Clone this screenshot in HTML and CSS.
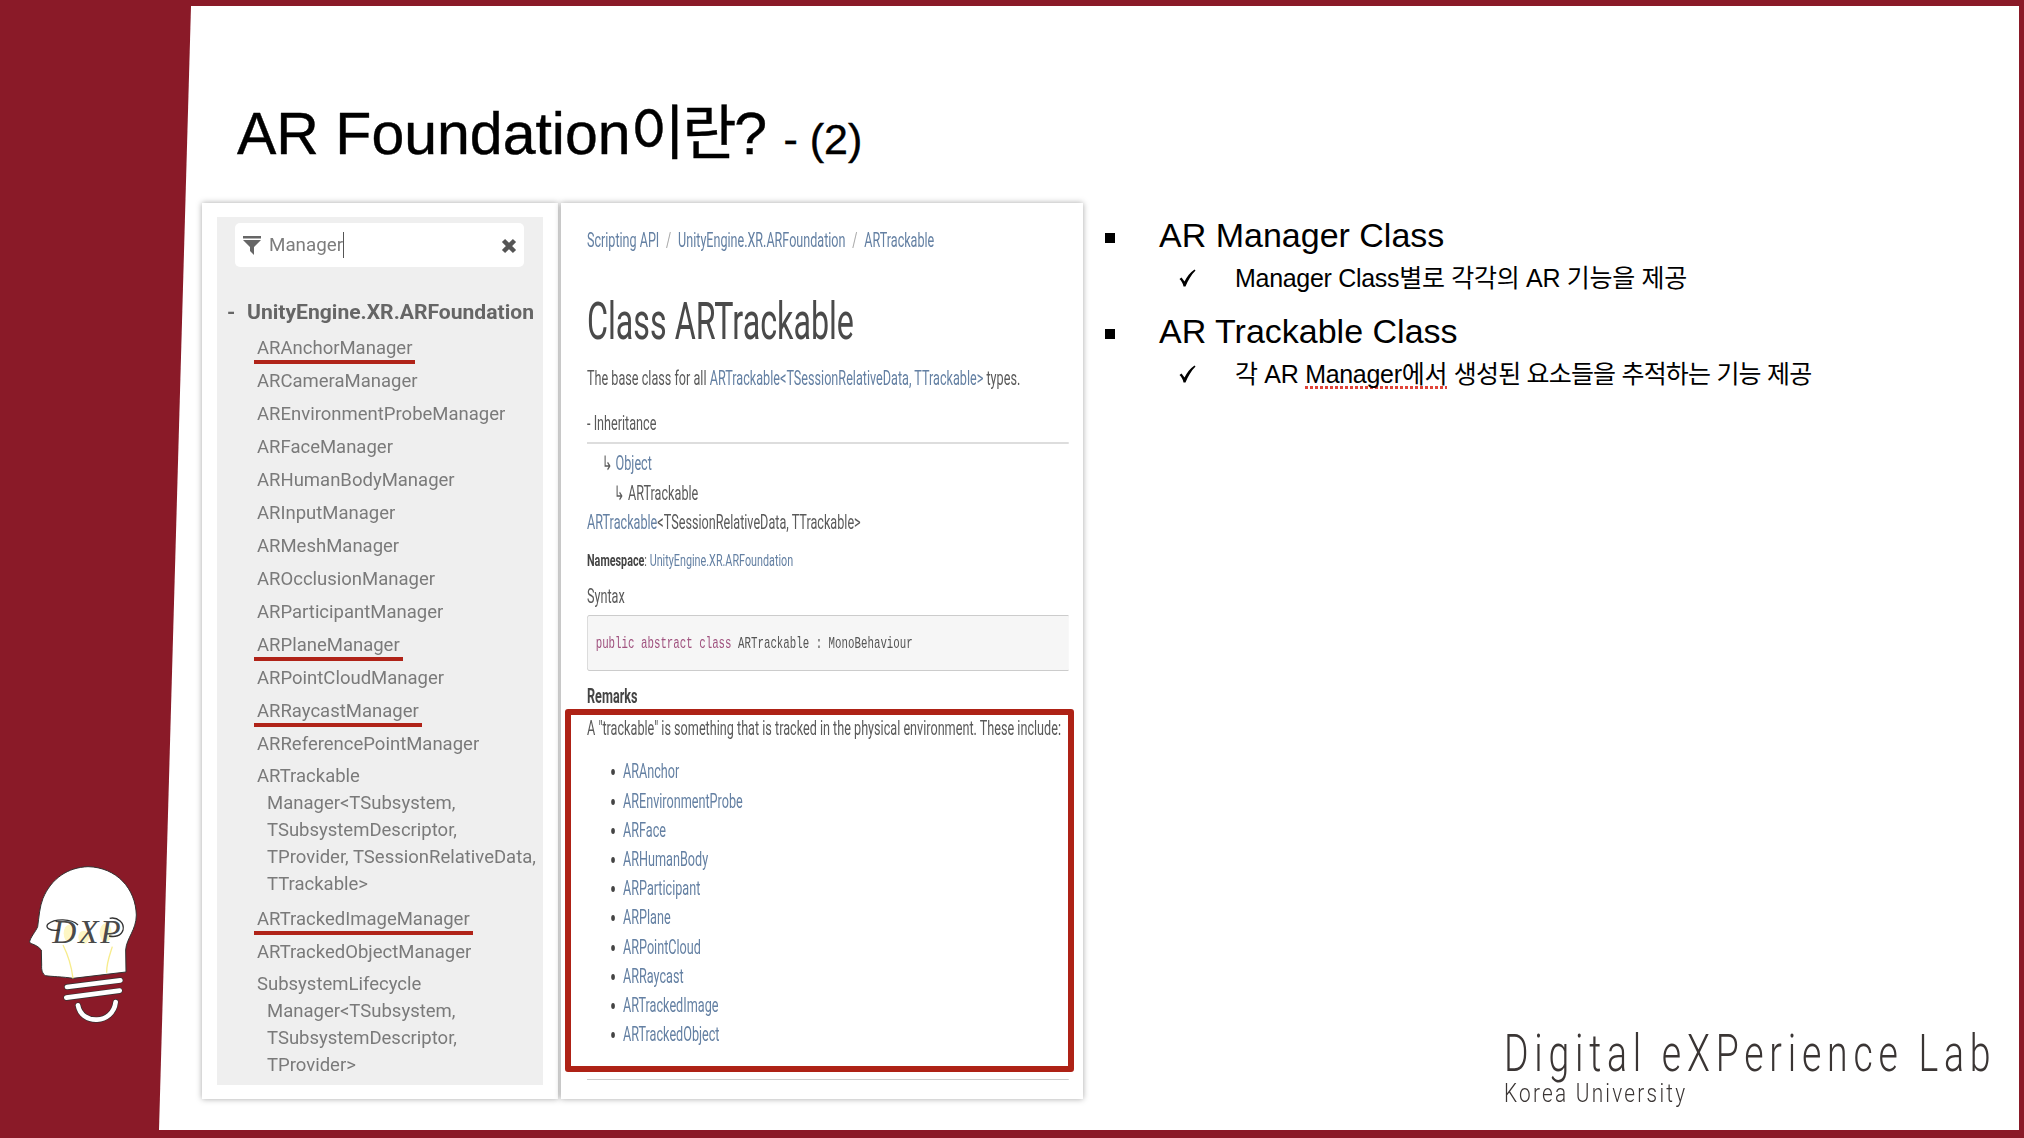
FILE: index.html
```html
<!DOCTYPE html>
<html lang="ko">
<head>
<meta charset="utf-8">
<title>AR Foundation이란?</title>
<link rel="stylesheet" href="styles.css">
</head>
<body>
<div class="slide">
  <aside class="rail">
    <svg class="logo" viewBox="40 30 360 510" aria-hidden="true">
      <path class="head" d="M60 275C62 262 78 245 84 230C88 200 90 170 100 145C125 85 175 52 235 50C320 52 378 115 380 195C380 240 350 265 348 300L349 366L190 385C160 380 125 380 108 377C98 372 95 360 96 345L95 300C85 288 72 283 62 280Z"/>
      <ellipse class="glow" cx="178" cy="250" rx="16" ry="26"/>
      <ellipse class="glow" cx="222" cy="262" rx="16" ry="20"/>
      <ellipse class="glow" cx="288" cy="248" rx="18" ry="28"/>
      <path class="filament" d="M160 285C175 315 185 345 190 385M308 290C300 315 290 340 291 368"/>
      <text class="mono" x="128" y="278" textLength="205">DXP</text>
      <path class="swash" d="M150 240C120 245 105 232 115 222C135 205 185 205 205 225M300 205C325 200 345 220 340 240C335 258 315 262 298 258"/>
      <path class="thread-edge" d="M172 411L332 391M170 443L330 422M205 466C215 525 310 525 318 456"/>
      <path class="thread" d="M172 411L332 391M170 443L330 422M205 466C215 525 310 525 318 456"/>
    </svg>
  </aside>
  <main class="panel">
    <h1 class="title">AR Foundation<span class="title-ko">이란</span>? <small class="title-sub">- (2)</small></h1>
    <div class="content">
      <section class="card nav-card">
        <div class="sidebar">
          <div class="search">
            <svg class="funnel" viewBox="0 0 18 19" aria-hidden="true"><path d="M0 0H18V2.5H0ZM0 4H18L11 11V19L7 15V11Z"/></svg>
            <span class="query">Manager</span><span class="caret"></span>
            <svg class="clear" viewBox="0 0 16 16" aria-hidden="true"><path d="M2.5 2.5L13.5 13.5M13.5 2.5L2.5 13.5"/></svg>
          </div>
          <div class="ns"><span class="ns-dash">-</span>UnityEngine.XR.ARFoundation</div>
          <ul class="tree">
            <li><span class="hit hit-a">ARAnchorManager</span></li>
            <li>ARCameraManager</li>
            <li>AREnvironmentProbeManager</li>
            <li>ARFaceManager</li>
            <li>ARHumanBodyManager</li>
            <li>ARInputManager</li>
            <li>ARMeshManager</li>
            <li>AROcclusionManager</li>
            <li>ARParticipantManager</li>
            <li><span class="hit">ARPlaneManager</span></li>
            <li>ARPointCloudManager</li>
            <li><span class="hit">ARRaycastManager</span></li>
            <li>ARReferencePointManager</li>
            <li class="hang">ARTrackable<br>Manager&lt;TSubsystem,<br>TSubsystemDescriptor,<br>TProvider, TSessionRelativeData,<br>TTrackable&gt;</li>
            <li class="after-hang"><span class="hit">ARTrackedImageManager</span></li>
            <li>ARTrackedObjectManager</li>
            <li class="hang">SubsystemLifecycle<br>Manager&lt;TSubsystem,<br>TSubsystemDescriptor,<br>TProvider&gt;</li>
          </ul>
        </div>
      </section>
      <section class="card doc-card">
        <div class="doc">
          <div class="crumbs"><a>Scripting API</a><i>/</i><a>UnityEngine.XR.ARFoundation</a><i>/</i><a>ARTrackable</a></div>
          <h2 class="doc-title">Class ARTrackable</h2>
          <p class="summary">The base class for all <a>ARTrackable&lt;TSessionRelativeData, TTrackable&gt;</a> types.</p>
          <div class="inherit-head">- Inheritance</div>
          <div class="inherit">
            <div class="lvl-1">↳ <a>Object</a></div>
            <div class="lvl-2">↳ ARTrackable</div>
            <div><a>ARTrackable</a>&lt;TSessionRelativeData, TTrackable&gt;</div>
          </div>
          <div class="namespace"><b>Namespace</b>: <a>UnityEngine.XR.ARFoundation</a></div>
          <div class="syntax">Syntax</div>
          <pre class="code"><em>public abstract class</em> ARTrackable : MonoBehaviour</pre>
          <div class="remarks">Remarks</div>
          <p class="remark-text">A "trackable" is something that is tracked in the physical environment. These include:</p>
          <ul class="links">
            <li><a>ARAnchor</a></li>
            <li><a>AREnvironmentProbe</a></li>
            <li><a>ARFace</a></li>
            <li><a>ARHumanBody</a></li>
            <li><a>ARParticipant</a></li>
            <li><a>ARPlane</a></li>
            <li><a>ARPointCloud</a></li>
            <li><a>ARRaycast</a></li>
            <li><a>ARTrackedImage</a></li>
            <li><a>ARTrackedObject</a></li>
          </ul>
          <div class="doc-end"></div>
        </div>
        <div class="callout"></div>
      </section>
      <section class="notes">
        <div class="bullets">
          <div class="point"><span class="square"></span>AR Manager Class</div>
          <div class="subpoint">
            <svg class="check" viewBox="0 0 17 18" aria-hidden="true"><path d="M0.5 10L2.5 8.5L5.5 12.5C8 7.5 11 3.5 15.5 0.5L16.5 1.5C12 6 9 11.5 6.5 17.5H4.5C4 14.5 2.5 12 0.5 10Z"/></svg>
            <span>Manager Class별로 각각의 AR 기능을 제공</span>
          </div>
          <div class="point point-next"><span class="square"></span>AR Trackable Class</div>
          <div class="subpoint">
            <svg class="check" viewBox="0 0 17 18" aria-hidden="true"><path d="M0.5 10L2.5 8.5L5.5 12.5C8 7.5 11 3.5 15.5 0.5L16.5 1.5C12 6 9 11.5 6.5 17.5H4.5C4 14.5 2.5 12 0.5 10Z"/></svg>
            <span>각 AR <span class="spell">Manager에서</span> <span class="tight">생성된 요소들을 추적하는 기능 제공</span></span>
          </div>
        </div>
        <footer class="lab">
          <div class="lab-name">Digital eXPerience Lab</div>
          <div class="lab-org">Korea University</div>
        </footer>
      </section>
    </div>
  </main>
</div>
</body>
</html>
```
FILE: styles.css
```css
* { box-sizing: border-box; }
html, body { margin: 0; padding: 0; }
body { width: 2024px; height: 1138px; overflow: hidden; font-family: "Liberation Sans", "Noto Sans CJK KR", sans-serif; }
.slide { display: flex; width: 2024px; height: 1138px; padding: 6px 5px 8px 0; background: #8a1a28; }

/* left rail + logo */
.rail { flex: 0 0 159px; display: flex; flex-direction: column; justify-content: flex-end; padding: 0 0 100px 23px; }
.logo { display: block; width: 120px; height: 170px; }
.head { fill: #fff; stroke: #333; stroke-width: 3; }
.glow { fill: #fdf6c4; }
.filament { fill: none; stroke: #f7ec8c; stroke-width: 4; }
.mono { font: italic 100px "Liberation Serif", serif; fill: #4a4a4a; }
.swash { fill: none; stroke: #333; stroke-width: 4; }
.thread-edge { fill: none; stroke: #333; stroke-width: 18; stroke-linecap: round; }
.thread { fill: none; stroke: #fff; stroke-width: 14; stroke-linecap: round; }

/* white slanted panel */
.panel { flex: 1; min-width: 0; padding: 93px 30px 0 43px; background: #fff; clip-path: polygon(32px 0, 100% 0, 100% 100%, 0 100%); }
.title { margin: 0 0 34px 35px; height: 70px; font-size: 59px; line-height: 70px; font-weight: 400; color: #000; white-space: nowrap; -webkit-text-stroke: .4px #000; }
.title-ko { letter-spacing: -2.5px; }
.title-sub { font-size: 43px; }
.content { display: flex; height: 896px; }
.card { min-width: 0; background: #fff; box-shadow: 0 0 6px rgba(0,0,0,.35); }

/* left screenshot */
.nav-card { flex: 0 0 356px; margin-right: 3px; padding: 14px 15px; font-family: Roboto, sans-serif; color: #7a7a7a; }
.sidebar { height: 868px; padding: 6px 19px 0 18px; background: #efefef; filter: blur(.3px); }
.search { display: flex; align-items: center; height: 44px; padding: 0 8px; background: #fff; border-radius: 5px; font-size: 18.8px; }
.funnel { width: 18px; height: 19px; margin-right: 8px; fill: #666; }
.query { color: #7d7d7d; }
.caret { width: 1px; height: 26px; background: #555; }
.clear { width: 16px; height: 16px; margin-top: 2px; margin-left: auto; margin-right: -1px; fill: none; stroke: #555; stroke-width: 4.5; }
.ns { margin: 31px 0 0 -8px; font-size: 21.1px; line-height: 28px; font-weight: 700; color: #666; white-space: nowrap; }
.ns-dash { display: inline-block; width: 20px; }
.tree { margin: 0 0 0 22px; padding: 2.5px 0 0; list-style: none; font-size: 18.5px; line-height: 27px; white-space: nowrap; }
.tree li { margin-top: 6px; }
.tree .hang { margin-top: 5px; padding-left: 10px; text-indent: -10px; }
.tree .after-hang { margin-top: 8px; }
.hit { position: relative; display: inline-block; }
.hit::after { content: ""; position: absolute; left: -3px; right: -3px; bottom: -2.5px; height: 4px; background: #b02318; }

/* right screenshot */
.doc-card { position: relative; flex: 0 0 522px; padding: 27px 0 0 26px; overflow: visible; }
.doc { width: 777px; transform: scaleX(.62); transform-origin: left top; font-family: Roboto, sans-serif; font-size: 20.4px; line-height: 24px; color: #5a5a5a; filter: blur(.3px); white-space: nowrap; }
.doc a { color: #6480a3; }
.doc p { margin: 0; }
.crumbs { height: 20px; line-height: 20px; font-size: 20.3px; }
.crumbs i { margin: 0 11px; font-style: normal; color: #aaa; }
.doc-title { margin: 42px 0 0; font-size: 52px; line-height: 60px; font-weight: 400; color: #4a4a4a; }
.doc .summary { margin-top: 14px; }
.inherit-head { margin-top: 21px; padding-bottom: 7px; border-bottom: 2px solid #ddd; height: 33px; }
.inherit { margin-top: 5.25px; line-height: 29.5px; }
.lvl-1 { padding-left: 24px; }
.lvl-2 { padding-left: 44px; }
.namespace { margin-top: 10.25px; font-size: 17.4px; }
.namespace b { color: #444; }
.syntax { margin-top: 12px; }
.code { margin: 7px 0 0; height: 56px; padding: 0 13px; background: #f6f6f6; border: 1px solid #ccc; border-right: 0; border-radius: 4px 0 0 4px; font: 17.4px/56px "Liberation Mono", monospace; color: #555; }
.code em { font-style: normal; color: #a0527f; }
.remarks { margin-top: 13px; font-weight: 700; color: #444; }
.doc .remark-text { margin-top: 8px; }
.links { margin: 17.4px 0 0; padding: 0 0 0 58px; line-height: 29.2px; color: #444; }
.doc-end { margin-top: 29.6px; height: 1px; background: #ccc; }
.callout { position: absolute; left: 4px; top: 506px; width: 509px; height: 363px; border: 6px solid #ae2216; border-radius: 3px; }

/* right column */
.notes { flex: 1; min-width: 0; display: flex; flex-direction: column; justify-content: space-between; padding: 12px 0 0 22px; }
.point { display: flex; align-items: center; font-size: 34px; line-height: 40px; color: #000; }
.point-next { margin-top: 17px; }
.square { flex: 0 0 10px; height: 10px; margin: 5px 44px 0 0; background: #000; }
.subpoint { display: flex; align-items: center; margin-top: 7px; padding-left: 74px; font-size: 25px; line-height: 32px; letter-spacing: -.3px; color: #000; white-space: nowrap; }
.check { flex: 0 0 17px; height: 18px; margin-right: 39px; fill: #000; }
.spell { background: repeating-linear-gradient(90deg, #e0443a 0 3px, transparent 3px 5px) left bottom / 100% 3px no-repeat; padding-bottom: 1px; }
.tight { letter-spacing: -.8px; }
.lab { margin: 0 0 -7px 399px; font-family: Roboto, sans-serif; font-weight: 300; color: #3a3534; white-space: nowrap; }
.lab-name { width: 680px; font-size: 52px; line-height: 48px; letter-spacing: 8px; transform: scaleX(.72); transform-origin: left center; }
.lab-org { margin-top: 2px; width: 300px; font-size: 26px; line-height: 26px; letter-spacing: 2.8px; transform: scaleX(.8); transform-origin: left center; }
```
